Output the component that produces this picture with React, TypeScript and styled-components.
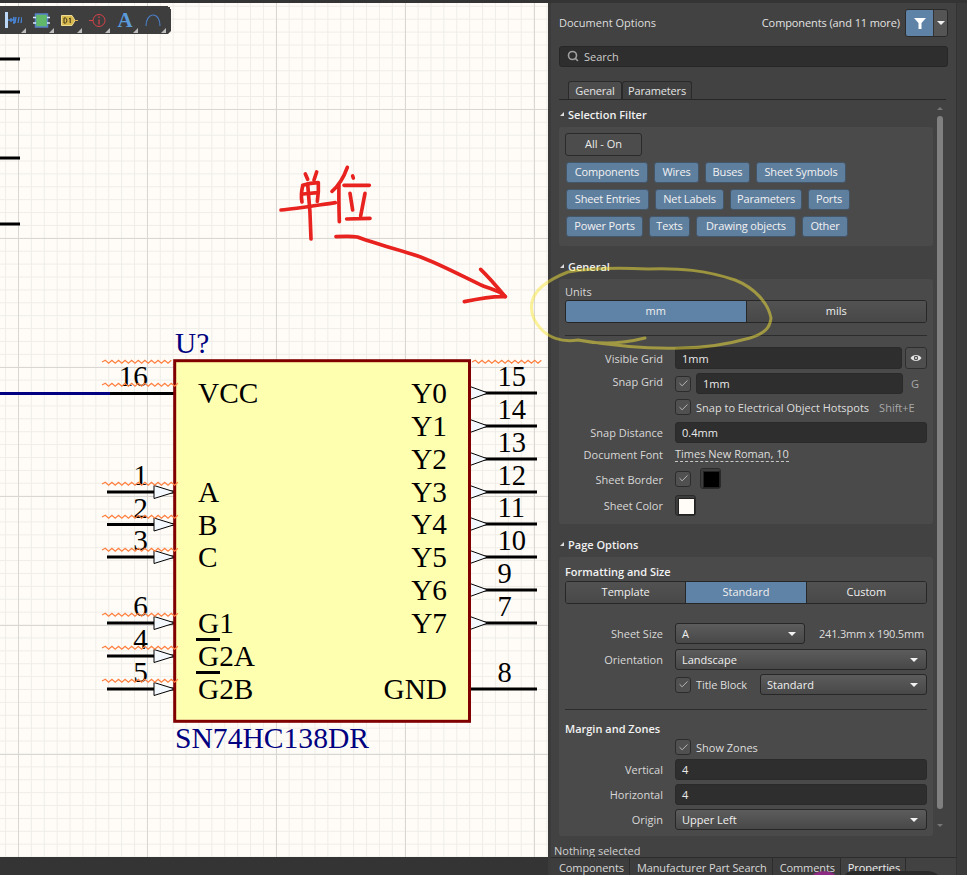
import React from "react";
import styled, { createGlobalStyle } from "styled-components";
import { Check, Search } from "lucide-react";

const GlobalStyle = createGlobalStyle`
  html, body { margin: 0; padding: 0; background: #343434; }
  body { font-family: "Open Sans", "Noto Sans", sans-serif; font-size: 11px; }
  * { box-sizing: border-box; }
`;

const Page = styled.div`
  position: relative;
  display: flex;
  width: 967px;
  height: 875px;
  overflow: hidden;
`;

/* ---------- schematic canvas ---------- */

const Canvas = styled.div`
  position: relative;
  flex: 0 0 548px;
  height: 854px;
  margin-top: 3px;
  overflow: hidden;
  background-color: #fffcf7;
  background-image:
    linear-gradient(to right, #d9d7d3 1px, transparent 1px),
    linear-gradient(to bottom, #d9d7d3 1px, transparent 1px),
    linear-gradient(to right, #efede8 1px, transparent 1px),
    linear-gradient(to bottom, #efede8 1px, transparent 1px);
  background-size: 129px 129px, 129px 129px, 12.9px 12.9px, 12.9px 12.9px;
  background-position: 18px 106px, 18px 106px, 5.1px 2.8px, 5.1px 2.8px;
`;

const Sheet = styled.svg`
  position: absolute;
  left: 0;
  top: -3px;
  width: 548px;
  height: 860px;
`;

const PinText = styled.text`
  font-family: "Liberation Serif", serif;
  font-size: ${(p) => p.$size || 29.3}px;
  fill: ${(p) => p.$color || "#000"};
`;

const Toolbar = styled.div`
  position: absolute;
  left: 0;
  top: 3px;
  display: flex;
  width: 171px;
  height: 28px;
  background: #3e3e3e;
  clip-path: polygon(0 0, 168px 0, 168px 1px, 170px 1px, 170px 3px, 171px 3px, 171px 25px, 169px 27px, 168px 28px, 0 28px);
`;

const ToolButton = styled.div`
  position: relative;
  flex: 0 0 28px;
  display: flex;
  align-items: center;
  justify-content: center;
  padding-right: 2px;
  &::after {
    content: "";
    position: absolute;
    right: 2px;
    bottom: 1px;
    border-style: solid;
    border-width: 0 0 5px 5px;
    border-color: transparent transparent #bdbdbd transparent;
  }
`;

const ToolLetter = styled.span`
  font-family: "Liberation Serif", serif;
  font-weight: 700;
  font-size: 21px;
  line-height: 20px;
  color: #5b9bdc;
`;

const wave = (x1: number, x2: number, y: number) => {
  let d = `M${x1} ${y}`;
  let up = true;
  for (let x = x1 + 3.3; x <= x2; x += 3.3) {
    d += ` L${x.toFixed(1)} ${up ? y - 1.7 : y + 1.3}`;
    up = !up;
  }
  return d;
};

const leftPins = [
  { n: "1", label: "A", y: 492 },
  { n: "2", label: "B", y: 524.5 },
  { n: "3", label: "C", y: 557 },
  { n: "6", label: "G1", y: 623 },
  { n: "4", label: "G2A", y: 656 },
  { n: "5", label: "G2B", y: 689 },
];

const rightPins = [
  { n: "15", label: "Y0", y: 393 },
  { n: "14", label: "Y1", y: 426 },
  { n: "13", label: "Y2", y: 459 },
  { n: "12", label: "Y3", y: 492 },
  { n: "11", label: "Y4", y: 524 },
  { n: "10", label: "Y5", y: 557 },
  { n: "9", label: "Y6", y: 590 },
  { n: "7", label: "Y7", y: 623 },
];

const Schematic = () => (
  <Sheet viewBox="0 0 548 860">
    {[59, 92, 158, 224].map((y) => (
      <line key={y} x1="0" x2="20" y1={y} y2={y} stroke="#000" strokeWidth="3" />
    ))}

    <line x1="0" x2="110" y1="393.5" y2="393.5" stroke="#000080" strokeWidth="3" />
    <line x1="110" x2="175" y1="393.5" y2="393.5" stroke="#000" strokeWidth="3" />
    <PinText x="148" y="386" textAnchor="end">16</PinText>

    {leftPins.map((p) => (
      <g key={p.n}>
        <line x1="107" x2="175" y1={p.y} y2={p.y} stroke="#000" strokeWidth="3" />
        <polygon points={`154,${p.y - 6.5} 175,${p.y} 154,${p.y + 6.5}`} fill="#f4f8ff" stroke="#000" strokeWidth="1" />
        <PinText x="148" y={p.y - 7} textAnchor="end">{p.n}</PinText>
      </g>
    ))}

    {rightPins.map((p) => (
      <g key={p.n}>
        <line x1="470" x2="537" y1={p.y} y2={p.y} stroke="#000" strokeWidth="3" />
        <polygon points={`470,${p.y - 6.5} 488,${p.y} 470,${p.y + 6.5}`} fill="#f4f8ff" stroke="#000" strokeWidth="1" />
        <PinText x="497.5" y={p.y - 7} $size={28.5}>{p.n}</PinText>
      </g>
    ))}
    <line x1="470" x2="537" y1="689" y2="689" stroke="#000" strokeWidth="3" />
    <PinText x="497.5" y="682" $size={28.5}>8</PinText>

    <rect x="174.7" y="360.7" width="294.8" height="360.6" fill="#ffffb0" stroke="#800000" strokeWidth="3" />

    <PinText x="198" y="403">VCC</PinText>
    {leftPins.map((p) => (
      <PinText key={p.label} x="198" y={p.y + 10}>{p.label}</PinText>
    ))}
    {rightPins.map((p) => (
      <PinText key={p.label} x="447" y={p.y + 10} textAnchor="end">{p.label}</PinText>
    ))}
    <PinText x="447" y="699" textAnchor="end">GND</PinText>
    <line x1="196" x2="220" y1="639.5" y2="639.5" stroke="#000" strokeWidth="3" />
    <line x1="196" x2="220" y1="672.5" y2="672.5" stroke="#000" strokeWidth="3" />

    <PinText x="175" y="353" $color="#000080">U?</PinText>
    <PinText x="175" y="748" $color="#000080" $size={29.6}>SN74HC138DR</PinText>

    <g fill="none" stroke="#ff7f3f" strokeWidth="1.2">
      <path d={wave(102, 173, 362)} />
      <path d={wave(102, 181, 385)} />
      <path d={wave(102, 181, 484)} />
      <path d={wave(102, 181, 517)} />
      <path d={wave(102, 181, 550)} />
      <path d={wave(102, 181, 615)} />
      <path d={wave(102, 181, 648)} />
      <path d={wave(102, 181, 681)} />
      <path d={wave(472, 542, 362)} />
    </g>

    {/* freehand red note and arrow */}
    <g
      transform="translate(270 160) scale(0.3333)"
      fill="none"
      stroke="#e8231f"
      strokeWidth="11"
      strokeLinecap="round"
      strokeLinejoin="round"
      aria-label="单位"
    >
      <path d="M33 150 C80 146 140 136 196 128" />
      <path d="M113 72 C118 120 122 180 123 237" />
      <path d="M106 42 L113 58 M140 36 L132 60" />
      <path d="M98 78 C94 95 93 112 96 126 M98 76 C115 70 130 68 145 68 C146 85 145 105 142 124 M100 102 L142 98" />
      <path d="M232 22 C222 50 205 78 186 94 M207 72 C206 110 207 150 208 185" />
      <path d="M248 48 L250 54 M222 76 L298 76 M240 100 L248 150 M285 100 L272 168 M230 177 L300 175" />
      <path d="M198 230 C220 229 245 228 262 231 C295 244 370 265 450 290 C510 312 590 355 640 378 C665 388 690 392 706 410" />
      <path d="M632 328 C655 350 685 385 706 410 C670 408 625 416 583 425" />
    </g>
  </Sheet>
);

const TopTools = () => (
  <Toolbar>
    <ToolButton>
      <svg width="17" height="16" viewBox="0 0 17 16">
        <rect x="0" y="0" width="3" height="16" fill="#bcd6f5" />
        <path d="M3 8 H6 M6 6 V10 M6 8 H8 L9 5 V11 M11 5 L10 11 M14 5 L13 11 M17 5 L16 11 M8 11 H10" stroke="#4a86d8" strokeWidth="1.3" fill="none" />
      </svg>
    </ToolButton>
    <ToolButton>
      <svg width="17" height="15" viewBox="0 0 17 15">
        <rect x="2.5" y="1" width="12" height="13" fill="#62b86a" stroke="#5580c8" strokeWidth="1.5" />
        <path d="M0 4.5 H3 M0 10 H3 M14 4.5 H17 M14 10 H17" stroke="#d8e8ff" strokeWidth="1.5" />
      </svg>
    </ToolButton>
    <ToolButton>
      <svg width="17" height="11" viewBox="0 0 17 11">
        <path d="M.5 .5 H11 L14 5.5 L11 10.5 H.5 Z" fill="#d8b94e" stroke="#f0dc90" />
        <path d="M14 5.5 H17" stroke="#d8a94e" strokeWidth="1" />
        <path d="M3 3 V8 H4.5 C6.3 8 6.3 3 4.5 3 Z M8 4 L9.2 3 V8" fill="none" stroke="#3a3218" strokeWidth="1" />
      </svg>
    </ToolButton>
    <ToolButton>
      <svg width="17" height="15" viewBox="0 0 17 15">
        <circle cx="10" cy="7.5" r="6" fill="none" stroke="#d8434a" strokeWidth="1" />
        <path d="M0 7.5 H4 M10 6.5 V11.5 M10 3.5 V5" stroke="#d8434a" strokeWidth="1.2" />
      </svg>
    </ToolButton>
    <ToolButton>
      <ToolLetter>A</ToolLetter>
    </ToolButton>
    <ToolButton>
      <svg width="16" height="13" viewBox="0 0 16 13">
        <path d="M1 12 C1 5 4.5 1 8 1 C12 1 15 5 15 12" fill="none" stroke="#4a7cc0" strokeWidth="1.2" />
      </svg>
    </ToolButton>
  </Toolbar>
);

/* ---------- properties panel ---------- */

const Panel = styled.aside`
  display: flex;
  flex-direction: column;
  flex: 1;
  height: 875px;
  background: #3b3b3b;
  color: #dcdcdc;
  border-top: 3px solid #343434;
  padding-left: 3px;
`;

const PanelBody = styled.div`
  width: 406px;
  height: 872px;
  background: #424242;
  border-right: 1px solid #333;
  display: flex;
  flex-direction: column;
`;

const HeaderRow = styled.div`
  display: flex;
  align-items: center;
  height: 28px;
  margin: 6px 8px 0 8px;
`;

const HeaderTitle = styled.span`
  flex: 1;
  padding-bottom: 2px;
  color: #dedede;
`;

const HeaderFilter = styled.span`
  margin-right: 5px;
  padding-bottom: 2px;
  letter-spacing: -0.1px;
  color: #e2e2e2;
`;

const FilterSplit = styled.div`
  display: flex;
  width: 43px;
  height: 28px;
  border: 1px solid #2b2b2b;
  border-radius: 3px;
  overflow: hidden;
`;

const FilterMain = styled.div`
  flex: 1;
  display: flex;
  align-items: center;
  justify-content: center;
  background: #5f83a6;
`;

const FilterCaret = styled.div`
  flex: 0 0 14px;
  display: flex;
  align-items: center;
  justify-content: center;
  background: #555;
  border-left: 1px solid #333;
`;

const Caret = styled.span`
  display: block;
  width: 0;
  height: 0;
  border-left: 4px solid transparent;
  border-right: 4px solid transparent;
  border-top: 4px solid #f2f2f2;
`;

const SearchBox = styled.div`
  display: flex;
  align-items: center;
  gap: 5px;
  height: 21px;
  margin: 9px 8px 0 8px;
  padding: 0 0 1px 7px;
  background: #2e2e2e;
  border: 1px solid #272727;
  border-radius: 3px;
  color: #cccccc;
`;

const TabRow = styled.div`
  display: flex;
  height: 19px;
  margin: 14px 10px 0 8px;
  padding-left: 9px;
  border-bottom: 1px solid #262626;
`;

const TabItem = styled.div`
  display: flex;
  align-items: center;
  justify-content: center;
  width: ${(p) => p.$w}px;
  height: 18px;
  border: 1px solid #2a2a2a;
  border-bottom: none;
  border-radius: 3px 3px 0 0;
  letter-spacing: -0.15px;
  background: ${(p) => (p.$active ? "#4c4c4c" : "#3f3f3f")};
  color: #e4e4e4;
`;

const ScrollArea = styled.div`
  display: flex;
  height: 742px;
  margin-left: 8px;
  overflow: hidden;
`;

const ScrollContent = styled.div`
  flex: 0 0 374px;
`;

const ScrollTrack = styled.div`
  flex: 0 0 6px;
  margin-left: 4px;
  padding-top: 7px;
  display: flex;
  flex-direction: column;
  align-items: center;
`;

const ScrollArrow = styled.span`
  display: block;
  width: 0;
  height: 0;
  border-left: 3px solid transparent;
  border-right: 3px solid transparent;
  ${(p) => (p.$down ? "border-top: 3px solid #777; margin-top: 15px;" : "border-bottom: 3px solid #777; margin-bottom: 6px;")}
`;

const ScrollThumb = styled.div`
  width: 6px;
  height: 693px;
  border-radius: 3px;
  background: #808080;
`;

const Section = styled.section`
  margin-top: 13px;
  &:first-child { margin-top: 7px; }
`;

const SectionTitle = styled.div`
  display: flex;
  align-items: center;
  gap: 4px;
  height: 16px;
  margin-bottom: 4px;
  padding: 0 0 2px 1px;
  font-weight: 600;
  color: #f0f0f0;
  &::before {
    content: "";
    border-style: solid;
    border-width: 0 0 4px 4px;
    border-color: transparent transparent #dcdcdc transparent;
  }
`;

const Block = styled.div`
  padding: ${(p) => p.$pad || "6px 6px 8px"};
  background: #4a4a4a;
  border-radius: 3px;
`;

const AllButton = styled.div`
  display: flex;
  align-items: center;
  justify-content: center;
  width: 77px;
  height: 23px;
  padding-bottom: 2px;
  background: #4c4c4c;
  border: 1px solid #2a2a2a;
  border-radius: 3px;
  color: #eaeaea;
`;

const ChipRow = styled.div`
  display: flex;
  gap: 6px;
  margin-top: 6px;
  padding-left: 1px;
`;

const Chip = styled.div`
  display: flex;
  align-items: center;
  justify-content: center;
  width: ${(p) => p.$w}px;
  height: 21px;
  padding-bottom: 2px;
  background: #5f7f9f;
  border: 1px solid #44566a;
  border-radius: 3px;
  letter-spacing: -0.15px;
  color: #f2f2f2;
  white-space: nowrap;
`;

const FieldLabel = styled.div`
  height: 16px;
  line-height: 16px;
  color: #d8d8d8;
`;

const GroupTitle = styled.div`
  height: 16px;
  margin-top: ${(p) => p.$mt || 0}px;
  line-height: 16px;
  font-weight: 600;
  color: #f2f2f2;
`;

const Segmented = styled.div`
  display: flex;
  height: 23px;
  margin-top: ${(p) => p.$mt || 0}px;
  border: 1px solid #272727;
  border-radius: 3px;
  overflow: hidden;
  background: #4e4e4e;
`;

const Segment = styled.div`
  flex: 1;
  display: flex;
  align-items: center;
  justify-content: center;
  padding-bottom: 2px;
  color: #f0f0f0;
  background: ${(p) => (p.$active ? "#5f83a6" : "linear-gradient(#525252, #484848)")};
  & + & { border-left: 1px solid #272727; }
`;

const Rule = styled.div`
  height: 1px;
  margin-top: ${(p) => p.$mt || 0}px;
  background: #2c2c2c;
`;

const Row = styled.div`
  display: grid;
  grid-template-columns: 98px minmax(0, 1fr);
  column-gap: 12px;
  align-items: center;
  height: ${(p) => p.$h || 21}px;
  margin-top: ${(p) => p.$mt || 0}px;
`;

const RowLabel = styled.div`
  padding: ${(p) => p.$pad || 0};
  text-align: right;
  color: #d8d8d8;
  white-space: nowrap;
`;

const RowBody = styled.div`
  display: flex;
  align-items: center;
  gap: ${(p) => p.$gap ?? 5}px;
  height: 100%;
  min-width: 0;
`;

const Input = styled.div`
  flex: 1;
  display: flex;
  align-items: center;
  height: 100%;
  padding-left: 6px;
  background: #2e2e2e;
  border: 1px solid #2a2a2a;
  border-radius: 3px;
  color: #eaeaea;
`;

const Select = styled.div`
  flex: ${(p) => (p.$w ? `0 0 ${p.$w}px` : "1")};
  display: flex;
  align-items: center;
  justify-content: space-between;
  height: 100%;
  padding: 0 8px 0 6px;
  background: linear-gradient(#5c5c5c, #484848);
  border: 1px solid #272727;
  border-radius: 3px;
  color: #f0f0f0;
`;

const Box = styled.div`
  flex: 0 0 16px;
  display: flex;
  align-items: center;
  justify-content: center;
  width: 16px;
  height: 16px;
  background: #505050;
  border: 1px solid #2c2c2c;
  border-radius: 3px;
  color: #e4e4e4;
`;

const IconButton = styled.div`
  flex: 0 0 22px;
  display: flex;
  align-items: center;
  justify-content: center;
  height: 100%;
  margin-left: -2px;
  background: #4e4e4e;
  border: 1px solid #2f2f2f;
  border-radius: 3px;
`;

const Hint = styled.span`
  flex: 0 0 auto;
  width: ${(p) => (p.$w ? `${p.$w}px` : "auto")};
  margin-left: ${(p) => p.$ml || 0}px;
  color: #a8a8a8;
  white-space: nowrap;
`;

const Plain = styled.span`
  margin-right: ${(p) => p.$mr || 0}px;
  letter-spacing: ${(p) => p.$track || 0}px;
  color: #dedede;
  white-space: nowrap;
`;

const FontLink = styled.span`
  color: #dedede;
  height: 16px;
  line-height: 15px;
  border-bottom: 1px dashed #c8c8c8;
`;

const Swatch = styled.div`
  flex: 0 0 auto;
  width: ${(p) => p.$size}px;
  height: ${(p) => p.$size}px;
  padding: 2px;
  background: #3c3c3c;
  border: 1px solid #2a2a2a;
  border-radius: 3px;
  &::after {
    content: "";
    display: block;
    width: 100%;
    height: 100%;
    background: ${(p) => p.$color};
    border: 1px solid #222;
  }
`;

const StatusLine = styled.div`
  height: 15px;
  padding-left: 3px;
  line-height: 17px;
  color: #d0d0d0;
`;

const DockTabs = styled.div`
  display: flex;
  height: 18px;
  border-top: 1px solid #2c2c2c;
`;

const DockTab = styled.div`
  display: flex;
  align-items: center;
  height: 18px;
  padding: 0 5px 0 7px;
  border-right: 1px solid #2c2c2c;
  background: ${(p) => (p.$active ? "#424242" : "#3d3d3d")};
  color: ${(p) => (p.$active ? "#f0f0f0" : "#d8d8d8")};
  letter-spacing: -0.1px;
  white-space: nowrap;
  &:first-child { padding-left: 8px; }
`;

const Scribble = styled.svg`
  position: absolute;
  left: 0;
  top: 0;
  width: 967px;
  height: 875px;
  pointer-events: none;
`;

const Tick = () => (
  <Box>
    <Check size={11} strokeWidth={1.5} />
  </Box>
);

const chipRows = [
  [
    { label: "Components", w: 82 },
    { label: "Wires", w: 45 },
    { label: "Buses", w: 45 },
    { label: "Sheet Symbols", w: 90 },
  ],
  [
    { label: "Sheet Entries", w: 83 },
    { label: "Net Labels", w: 69 },
    { label: "Parameters", w: 72 },
    { label: "Ports", w: 42 },
  ],
  [
    { label: "Power Ports", w: 77 },
    { label: "Texts", w: 41 },
    { label: "Drawing objects", w: 100 },
    { label: "Other", w: 46 },
  ],
];

const PropertiesPanel = () => (
  <Panel>
    <PanelBody>
      <HeaderRow>
        <HeaderTitle>Document Options</HeaderTitle>
        <HeaderFilter>Components (and 11 more)</HeaderFilter>
        <FilterSplit>
          <FilterMain>
            <svg width="12" height="11" viewBox="0 0 12 11">
              <path d="M0 0 H12 L7.5 5 V11 H4.5 V5 Z" fill="#fff" />
            </svg>
          </FilterMain>
          <FilterCaret>
            <Caret />
          </FilterCaret>
        </FilterSplit>
      </HeaderRow>

      <SearchBox>
        <Search size={12} strokeWidth={3.2} color="#a0a0a0" />
        Search
      </SearchBox>

      <TabRow>
        <TabItem $active $w={54}>General</TabItem>
        <TabItem $w={70}>Parameters</TabItem>
      </TabRow>

      <ScrollArea>
        <ScrollContent>
          <Section>
            <SectionTitle>Selection Filter</SectionTitle>
            <Block $pad="6px 6px 9px">
              <AllButton>All - On</AllButton>
              {chipRows.map((row) => (
                <ChipRow key={row[0].label}>
                  {row.map((c) => (
                    <Chip key={c.label} $w={c.w}>{c.label}</Chip>
                  ))}
                </ChipRow>
              ))}
            </Block>
          </Section>

          <Section>
            <SectionTitle>General</SectionTitle>
            <Block $pad="5px 6px 8px">
              <FieldLabel>Units</FieldLabel>
              <Segmented>
                <Segment $active>mm</Segment>
                <Segment>mils</Segment>
              </Segmented>
              <Rule $mt={12} />
              <Row $mt={11} $h={22}>
                <RowLabel>Visible Grid</RowLabel>
                <RowBody>
                  <Input>1mm</Input>
                  <IconButton>
                    <svg width="12" height="10" viewBox="0 0 12 10">
                      <path d="M0.5 5 C3 1 9 1 11.5 5 C9 9 3 9 0.5 5 Z" fill="#e8e8e8" />
                      <circle cx="6" cy="5" r="2.2" fill="#4e4e4e" />
                      <circle cx="6" cy="5" r="1" fill="#e8e8e8" />
                    </svg>
                  </IconButton>
                </RowBody>
              </Row>
              <Row $mt={4}>
                <RowLabel $pad="0 0 4px">Snap Grid</RowLabel>
                <RowBody>
                  <Tick />
                  <Input>1mm</Input>
                  <Hint $ml={3} $w={16}>G</Hint>
                </RowBody>
              </Row>
              <Row $mt={5} $h={16}>
                <span />
                <RowBody>
                  <Tick />
                  <Plain>Snap to Electrical Object Hotspots</Plain>
                  <Hint $ml={5}>Shift+E</Hint>
                </RowBody>
              </Row>
              <Row $mt={7}>
                <RowLabel>Snap Distance</RowLabel>
                <RowBody>
                  <Input>0.4mm</Input>
                </RowBody>
              </Row>
              <Row $mt={3} $h={16}>
                <RowLabel>Document Font</RowLabel>
                <RowBody>
                  <FontLink>Times New Roman, 10</FontLink>
                </RowBody>
              </Row>
              <Row $mt={6}>
                <RowLabel $pad="2px 0 0">Sheet Border</RowLabel>
                <RowBody $gap={9}>
                  <Tick />
                  <Swatch $size={21} $color="#000" />
                </RowBody>
              </Row>
              <Row $mt={5} $h={22}>
                <RowLabel>Sheet Color</RowLabel>
                <RowBody>
                  <Swatch $size={21} $color="#fffcf7" />
                </RowBody>
              </Row>
            </Block>
          </Section>

          <Section>
            <SectionTitle>Page Options</SectionTitle>
            <Block $pad="7px 6px 6px">
              <GroupTitle>Formatting and Size</GroupTitle>
              <Segmented $mt={1}>
                <Segment>Template</Segment>
                <Segment $active>Standard</Segment>
                <Segment>Custom</Segment>
              </Segmented>
              <Row $mt={19}>
                <RowLabel>Sheet Size</RowLabel>
                <RowBody $gap={14}>
                  <Select $w={130}>
                    A<Caret />
                  </Select>
                  <Plain $track={-0.2}>241.3mm x 190.5mm</Plain>
                </RowBody>
              </Row>
              <Row $mt={5}>
                <RowLabel>Orientation</RowLabel>
                <RowBody>
                  <Select>
                    Landscape
                    <Caret />
                  </Select>
                </RowBody>
              </Row>
              <Row $mt={4}>
                <span />
                <RowBody>
                  <Tick />
                  <Plain $mr={8} $track={-0.1}>Title Block</Plain>
                  <Select>
                    Standard
                    <Caret />
                  </Select>
                </RowBody>
              </Row>
              <Rule $mt={14} />
              <GroupTitle $mt={11}>Margin and Zones</GroupTitle>
              <Row $mt={2} $h={16}>
                <span />
                <RowBody>
                  <Tick />
                  <Plain>Show Zones</Plain>
                </RowBody>
              </Row>
              <Row $mt={4}>
                <RowLabel>Vertical</RowLabel>
                <RowBody>
                  <Input>4</Input>
                </RowBody>
              </Row>
              <Row $mt={4}>
                <RowLabel>Horizontal</RowLabel>
                <RowBody>
                  <Input>4</Input>
                </RowBody>
              </Row>
              <Row $mt={4}>
                <RowLabel>Origin</RowLabel>
                <RowBody>
                  <Select>
                    Upper Left
                    <Caret />
                  </Select>
                </RowBody>
              </Row>
            </Block>
          </Section>
        </ScrollContent>
        <ScrollTrack>
          <ScrollArrow />
          <ScrollThumb />
          <ScrollArrow $down />
        </ScrollTrack>
      </ScrollArea>

      <StatusLine>Nothing selected</StatusLine>
      <DockTabs>
        <DockTab>Components</DockTab>
        <DockTab>Manufacturer Part Search</DockTab>
        <DockTab>Comments</DockTab>
        <DockTab $active>Properties</DockTab>
      </DockTabs>
    </PanelBody>
  </Panel>
);

export default function App() {
  return (
    <Page>
      <GlobalStyle />
      <Canvas>
        <Schematic />
        <TopTools />
      </Canvas>
      <PropertiesPanel />
      <Scribble viewBox="0 0 967 875">
        <path
          d="M645 338 C625 343 600 345 578 340 C560 343 548 336 542 330 C534 322 530 312 532 302 C534 292 545 281 568 272 C590 268 625 268 648 269 C680 268 705 270 735 280 C755 288 768 303 771 318 C770 328 765 333 750 338 C725 345 700 348 681 348 C650 349 615 346 578 340"
          fill="none"
          stroke="#f5e63a"
          strokeOpacity="0.5"
          strokeWidth="3"
          strokeLinecap="round"
        />
        <path d="M845 875 C848 870 852 871 860 871 H925 C932 871 936 873 938 875 Z" fill="#2a2a2a" />
        <path d="M813 875 C816 870 832 870 835 875 Z" fill="#8a2a80" />
      </Scribble>
    </Page>
  );
}
